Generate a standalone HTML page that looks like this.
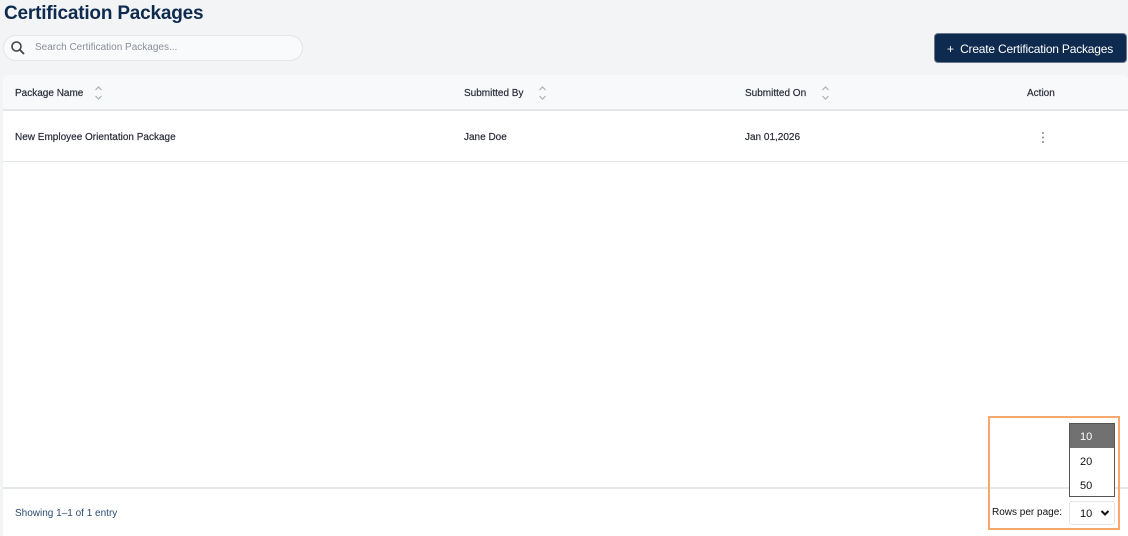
<!DOCTYPE html><html><head><style>
*{box-sizing:border-box;margin:0;padding:0}
body{width:1128px;height:536px;background:#f3f4f6;font-family:"Liberation Sans",sans-serif;position:relative;overflow:hidden;color:#2d3142}
.a{position:absolute}
h1{position:absolute;left:4px;top:3px;font-size:19px;font-weight:bold;color:#0e2a4f;letter-spacing:-0.2px}
.search{left:3px;top:35px;width:300px;height:26px;border:1px solid #e3e5ea;border-radius:13px;background:#f9fafb}
.search span{position:absolute;left:31px;top:6px;font-size:10px;color:#8a8f99}
.btn{left:934px;top:33px;width:193px;height:30px;background:#0e2a4f;border-radius:4px;color:#fff;font-size:12px;line-height:30px;padding-left:12px;border:1px solid #6b7a8f;letter-spacing:-0.2px}
.card{left:3px;top:75px;width:1125px;height:461px;background:#fff;border-radius:6px 6px 0 0}
.th{left:3px;top:75px;width:1125px;height:36px;background:#f8f9fb;border-bottom:2px solid #e4e6ea;border-radius:6px 6px 0 0}
.t{font-size:10px;color:#2a2d3a;-webkit-text-stroke:0.2px #2a2d3a}
</style></head><body>
<h1>Certification Packages</h1>
<div class="a search"><svg class="a" style="left:6px;top:4px" width="16" height="16" viewBox="0 0 16 16"><circle cx="6.5" cy="6.5" r="4.5" fill="none" stroke="#444" stroke-width="1.6"/><line x1="10" y1="10" x2="14" y2="14" stroke="#444" stroke-width="1.8"/></svg><span>Search Certification Packages...</span></div>
<div class="a btn">+&nbsp;&nbsp;Create Certification Packages</div>
<div class="a card"></div>
<div class="a th"></div>
<div class="a t" style="left:15px;top:88px">Package Name</div>
<svg class="a" style="left:94px;top:85px" width="9" height="16" viewBox="0 0 9 16"><path d="M1.5 5L4.5 2L7.5 5M1.5 11L4.5 14L7.5 11" fill="none" stroke="#aab0b8" stroke-width="1.2"/></svg>
<div class="a t" style="left:464px;top:88px">Submitted By</div>
<svg class="a" style="left:538px;top:85px" width="9" height="16" viewBox="0 0 9 16"><path d="M1.5 5L4.5 2L7.5 5M1.5 11L4.5 14L7.5 11" fill="none" stroke="#aab0b8" stroke-width="1.2"/></svg>
<div class="a t" style="left:745px;top:88px">Submitted On</div>
<svg class="a" style="left:821px;top:85px" width="9" height="16" viewBox="0 0 9 16"><path d="M1.5 5L4.5 2L7.5 5M1.5 11L4.5 14L7.5 11" fill="none" stroke="#aab0b8" stroke-width="1.2"/></svg>
<div class="a t" style="left:1027px;top:88px">Action</div>
<div class="a t" style="left:15px;top:132px">New Employee Orientation Package</div>
<div class="a t" style="left:464px;top:132px">Jane Doe</div>
<div class="a t" style="left:745px;top:132px">Jan 01,2026</div>
<svg class="a" style="left:1041px;top:131px" width="4" height="13"><circle cx="2" cy="2" r="1" fill="#888"/><circle cx="2" cy="6.5" r="1" fill="#888"/><circle cx="2" cy="11" r="1" fill="#888"/></svg>
<div class="a" style="left:3px;top:161px;width:1125px;height:1px;background:#e4e6ea"></div>
<div class="a" style="left:3px;top:487px;width:1125px;height:2px;background:#e4e6ea"></div>
<div class="a t" style="left:15px;top:508px;color:#2b4b70;-webkit-text-stroke:0">Showing 1–1 of 1 entry</div>
<div class="a" style="left:988px;top:416px;width:132px;height:114px;border:2px solid #f8a86c"></div>
<div class="a" style="left:1069px;top:423px;width:46px;height:74px;border:1px solid #555;background:#fff"></div>
<div class="a" style="left:1070px;top:424px;width:44px;height:24px;background:#717171;color:#fff;font-size:11px;line-height:26px;padding-left:10px">10</div>
<div class="a" style="left:1080px;top:456px;font-size:11px;color:#111">20</div>
<div class="a" style="left:1080px;top:480px;font-size:11px;color:#111">50</div>
<div class="a" style="left:992px;top:507px;font-size:10px;color:#111">Rows per page:</div>
<div class="a" style="left:1069px;top:501px;width:46px;height:24px;border:1px solid #e3e5ea;border-radius:3px;font-size:11px;color:#111;line-height:24px;padding-left:10px">10</div>
<svg class="a" style="left:1100px;top:509px" width="10" height="8"><path d="M1.5 2L5 5.5L8.5 2" fill="none" stroke="#111" stroke-width="2"/></svg>
</body></html>
